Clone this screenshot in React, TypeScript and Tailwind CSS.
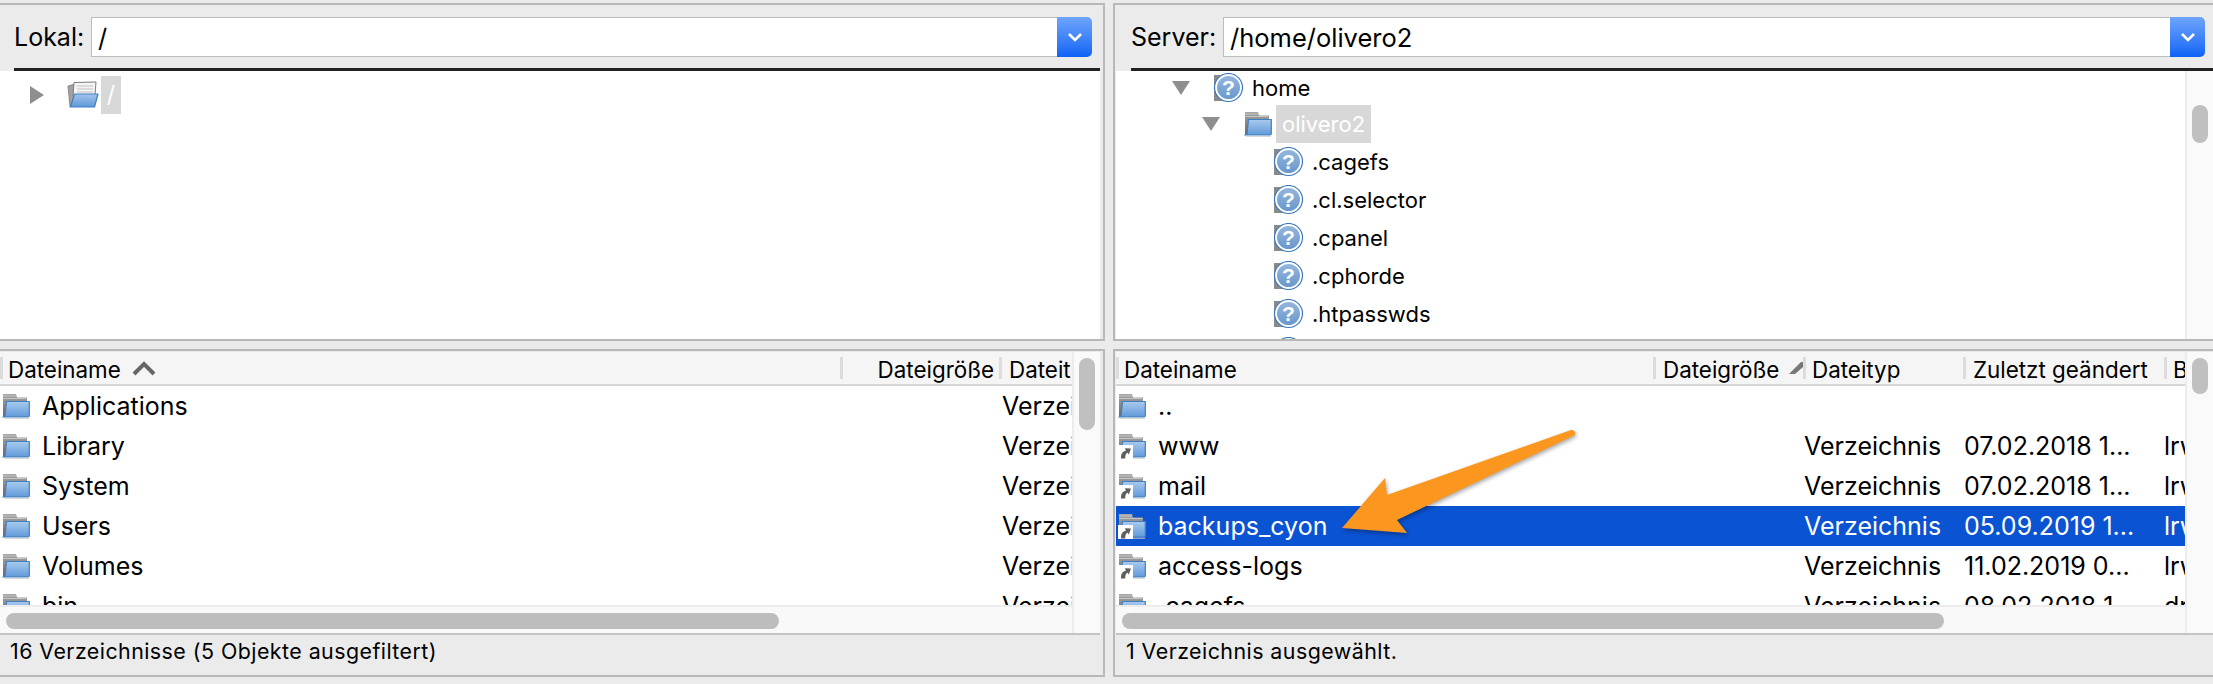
const fileColsLeft = ["Applications", "Library", "System", "Users", "Volumes", "bin"];

const serverRows = [
  { name: "..", link: false, type: "", date: "", attr: "" },
  { name: "www", link: true, type: "Verzeichnis", date: "07.02.2018 1...", attr: "lrwxrwxrwx" },
  { name: "mail", link: true, type: "Verzeichnis", date: "07.02.2018 1...", attr: "lrwxrwxrwx" },
  { name: "backups_cyon", link: true, type: "Verzeichnis", date: "05.09.2019 1...", attr: "lrwxrwxrwx", selected: true },
  { name: "access-logs", link: true, type: "Verzeichnis", date: "11.02.2019 0...", attr: "lrwxrwxrwx" },
  { name: ".cagefs", link: false, type: "Verzeichnis", date: "08.02.2018 1...", attr: "drwxr-xr-x" },
];

const treeChildren = [".cagefs", ".cl.selector", ".cpanel", ".cphorde", ".htpasswds", ".koality"];

function FolderIcon({ link = false }: { link?: boolean }) {
  return (
    <svg width="28" height="26" viewBox="0 0 28 26" className="shrink-0">
      <defs>
        <linearGradient id="folder-back" x1="0" y1="0" x2="0" y2="1">
          <stop offset="0" stopColor="#a6a6a6" />
          <stop offset="1" stopColor="#666666" />
        </linearGradient>
        <linearGradient id="folder-front" x1="0" y1="0" x2="0" y2="1">
          <stop offset="0" stopColor="#a9caee" />
          <stop offset="1" stopColor="#5f9ad9" />
        </linearGradient>
      </defs>
      <path d="M1 1 L1 24 L5 24 L5 8 L25 8 L25 4.5 L15 4.5 L14 1 Z" fill="url(#folder-back)" />
      <path d="M1 3 H14 M1 5.5 H24" stroke="#d0d0d0" strokeWidth="0.8" />
      <path d="M4.5 8.5 H27.3 V22.8 Q27.3 24 26 24 H1.5 L3 23 Z" fill="url(#folder-front)" stroke="#3f7fc6" strokeWidth="1.2" />
      <path d="M2 25.2 H27" stroke="#c8c8c8" strokeWidth="1" />
      {link && (
        <>
          <rect x="0" y="12" width="15" height="14" fill="#ffffff" />
          <path d="M3 25.5 C3 20.5 4.5 18.5 8 17.5 L6.8 15.2 L13 15.5 L10.8 21.5 L9.6 19.8 C7.8 20.5 7.2 22.5 7.2 25.5 Z" fill="#5f5f5f" />
        </>
      )}
    </svg>
  );
}

function OpenFolderIcon() {
  return (
    <svg width="32" height="28" viewBox="0 0 32 28" className="shrink-0">
      <defs>
        <linearGradient id="open-front" x1="0" y1="0" x2="0" y2="1">
          <stop offset="0" stopColor="#a3c5ec" />
          <stop offset="1" stopColor="#5d98d8" />
        </linearGradient>
      </defs>
      <path d="M1 5 L8 3 L8 24 L3 26 Z" fill="#a2a2a2" stroke="#777777" strokeWidth="0.8" />
      <path d="M7 1.5 L29 1 L28 14 L6 15 Z" fill="#f4f4f4" stroke="#7d7d7d" strokeWidth="1" />
      <path d="M10 5 H26 M10 8 H26 M10 11 H26" stroke="#c2c2c2" strokeWidth="1" />
      <path d="M7.5 13 L31 13 L27.5 26 L3.5 26 Z" fill="url(#open-front)" stroke="#3f7fc6" strokeWidth="1.2" strokeLinejoin="round" />
    </svg>
  );
}

function QuestionIcon() {
  return (
    <svg width="31" height="30" viewBox="0 0 31 30" className="shrink-0">
      <defs>
        <linearGradient id="question-fill" x1="0" y1="0" x2="0" y2="1">
          <stop offset="0" stopColor="#94b6dd" />
          <stop offset="1" stopColor="#6a97cc" />
        </linearGradient>
      </defs>
      <rect x="1" y="2" width="10" height="26" fill="#8a8a8a" />
      <circle cx="15.5" cy="14.5" r="14" fill="#ffffff" stroke="#3a78bd" strokeWidth="1.2" />
      <circle cx="15.5" cy="14.5" r="11.5" fill="url(#question-fill)" />
      <text x="15.5" y="22" textAnchor="middle" fontSize="21" fontWeight="700" fill="#ffffff" fontFamily="Liberation Sans, sans-serif">?</text>
    </svg>
  );
}

function Triangle({ open = false }: { open?: boolean }) {
  return (
    <svg width="18" height="18" viewBox="0 0 18 18" className="shrink-0">
      {open ? <path d="M0 2 H18 L9 16 Z" fill="#8e8e8e" /> : <path d="M2 0 L16 9 L2 18 Z" fill="#8e8e8e" />}
    </svg>
  );
}

function PathBar({ label, value, labelWidth }: { label: string; value: string; labelWidth: string }) {
  return (
    <div className="h-[66px] shrink-0 border-b-[3px] border-[#222222] flex items-center">
      <span className={`${labelWidth} shrink-0 pt-[2px] text-[25px] text-black`}>{label}</span>
      <div className="flex-1 h-[40px] bg-white border border-[#bcbcbc] border-r-0 flex items-center pl-[6px] pt-[3px] text-[25.5px] text-black">
        {value}
      </div>
      <div className="w-[35px] h-[40px] shrink-0 mr-[8px] rounded-r-[5px] bg-gradient-to-b from-[#6ea4fb] to-[#0a63f6] flex items-center justify-center">
        <svg width="16" height="10" viewBox="0 0 16 10">
          <path d="M2 2 L8 8 L14 2" fill="none" stroke="#ffffff" strokeWidth="2.6" />
        </svg>
      </div>
    </div>
  );
}

function VScroll({ thumb }: { thumb: string }) {
  return (
    <div className="w-[28px] shrink-0 bg-[#fafafa] border-l-2 border-[#ececec] pl-[5px] pt-[6px]">
      <div className={`w-[16px] ${thumb} rounded-full bg-[#c0c0c0]`} />
    </div>
  );
}

function HeadSep() {
  return <span className="w-[3px] h-[22px] shrink-0 bg-[#dcdcdc]" />;
}

function HScroll({ thumb, pad }: { thumb: string; pad: string }) {
  return (
    <div className="h-[28px] shrink-0 bg-[#ebebeb] flex">
      <div className={`flex-1 bg-[#f9f9f9] border-t-2 border-[#ececec] ${pad} pt-[6px]`}>
        <div className={`${thumb} h-[16px] rounded-full bg-[#bdbdbd]`} />
      </div>
    </div>
  );
}

export default function App() {
  return (
    <div className="relative w-[2213px] h-[684px] overflow-hidden bg-[#ebebeb] pt-[3px] font-['Inter',sans-serif] text-black">
      <div className="grid grid-cols-[1105px_1100px] gap-x-[8px] grid-rows-[338px_328px] gap-y-[8px]">
        {/* local tree */}
        <section className="border-t-2 border-r-2 border-b-2 border-[#b8b8b8] pr-[3px] flex flex-col overflow-hidden">
          <div className="pl-[14px] bg-[#ebebeb]">
            <PathBar label="Lokal:" value="/" labelWidth="w-[77px]" />
          </div>
          <div className="flex-1 bg-white flex items-start pl-[28px] pt-[5px] gap-[21px]">
            <div className="pt-[10px]">
              <Triangle />
            </div>
            <div className="flex items-center gap-[2px] h-[38px]">
              <OpenFolderIcon />
              <span className="w-[20px] h-[38px] bg-[#d8d8d8] flex items-center justify-center text-[23px] text-white">/</span>
            </div>
          </div>
        </section>

        {/* server tree */}
        <section className="border-t-2 border-l-2 border-b-2 border-[#b8b8b8] pl-[1px] flex flex-col overflow-hidden">
          <div className="pl-[15px] bg-[#ebebeb]">
            <PathBar label="Server:" value="/home/olivero2" labelWidth="w-[92px]" />
          </div>
          <div className="flex-1 flex min-h-0 bg-white">
            <div className="flex-1 overflow-hidden text-[22px] text-black">
              <div className="h-[34px] flex items-center pl-[56px]">
                <Triangle open />
                <span className="w-[23px]" />
                <QuestionIcon />
                <span className="ml-[8px]">home</span>
              </div>
              <div className="h-[38px] flex items-center pl-[86px]">
                <Triangle open />
                <span className="w-[24px]" />
                <FolderIcon />
                <span className="ml-[4px] h-[38px] px-[6px] bg-[#d8d8d8] text-white flex items-center">olivero2</span>
              </div>
              {treeChildren.map((name) => (
                <div key={name} className="h-[38px] flex items-center pl-[157px]">
                  <QuestionIcon />
                  <span className="ml-[8px]">{name}</span>
                </div>
              ))}
            </div>
            <div className="w-[28px] shrink-0 bg-[#fafafa] border-l-2 border-[#ececec] pl-[5px] pt-[34px]">
              <div className="w-[16px] h-[38px] rounded-full bg-[#c0c0c0]" />
            </div>
          </div>
        </section>

        {/* local files */}
        <section className="border-t-2 border-r-2 border-b-2 border-[#b8b8b8] pr-[3px] pt-[1px] flex flex-col overflow-hidden">
          <div className="flex flex-1 min-h-0">
            <div className="flex-1 flex flex-col min-w-0 overflow-hidden">
              <div className="h-[34px] shrink-0 bg-[#f5f5f5] border-b-2 border-[#d6d6d6] flex items-center text-[22.4px] whitespace-nowrap overflow-hidden">
                <HeadSep />
                <span className="w-[128px] pl-[5px] pt-[4px] shrink-0">Dateiname</span>
                <svg width="26" height="16" viewBox="0 0 26 16" className="shrink-0">
                  <path d="M3 14 L13 4 L23 14" fill="none" stroke="#666666" strokeWidth="4" />
                </svg>
                <span className="w-[683px] shrink-0" />
                <HeadSep />
                <span className="w-[156px] pr-[5px] pt-[4px] shrink-0 text-right">Dateigröße</span>
                <HeadSep />
                <span className="pl-[7px] pt-[4px]">Dateit</span>
              </div>
              <div className="flex-1 bg-white overflow-hidden">
                {fileColsLeft.map((name) => (
                  <div key={name} className="h-[40px] flex items-center text-[25px] whitespace-nowrap overflow-hidden pl-[2px]">
                    <FolderIcon />
                    <span className="ml-[12px] w-[960px] pt-[2px] shrink-0">{name}</span>
                    <span className="pt-[2px]">Verzeichnis</span>
                  </div>
                ))}
              </div>
              <HScroll thumb="w-[773px]" pad="pl-[6px]" />
            </div>
            <VScroll thumb="h-[72px]" />
          </div>
          <div className="h-[42px] shrink-0 border-t-2 border-[#c4c4c4] bg-[#ebebeb] flex items-start pl-[10px] text-[21.4px] tracking-[0.45px]">
            16 Verzeichnisse (5 Objekte ausgefiltert)
          </div>
        </section>

        {/* server files */}
        <section className="border-t-2 border-l-2 border-b-2 border-[#b8b8b8] pl-[1px] pt-[1px] flex flex-col overflow-hidden">
          <div className="flex flex-1 min-h-0">
            <div className="flex-1 flex flex-col min-w-0 overflow-hidden">
              <div className="h-[34px] shrink-0 bg-[#f5f5f5] border-b-2 border-[#d6d6d6] flex items-center text-[22.4px] whitespace-nowrap overflow-hidden">
                <HeadSep />
                <span className="w-[534px] pl-[5px] pt-[4px] shrink-0">Dateiname</span>
                <HeadSep />
                <span className="w-[133px] pl-[7px] pt-[4px] shrink-0">Dateigröße</span>
                <svg width="14" height="18" viewBox="0 0 14 18" className="shrink-0">
                  <path d="M0 15 L12 3 L14 3 L14 8 L6 15 Z" fill="#777777" />
                </svg>
                <HeadSep />
                <span className="w-[157px] pl-[6px] pt-[4px] shrink-0">Dateityp</span>
                <HeadSep />
                <span className="w-[198px] pl-[7px] pt-[4px] shrink-0">Zuletzt geändert</span>
                <HeadSep />
                <span className="pl-[6px] pt-[4px]">Besitzer</span>
              </div>
              <div className="flex-1 bg-white overflow-hidden">
                {serverRows.map((row) => (
                  <div
                    key={row.name}
                    className={`h-[40px] flex items-center text-[25px] whitespace-nowrap overflow-hidden pl-[2px] ${row.selected ? "bg-[#0a53d2] text-white" : ""}`}
                  >
                    <FolderIcon link={row.link} />
                    <span className="ml-[12px] w-[646px] pt-[2px] shrink-0">{row.name}</span>
                    <span className="w-[160px] pt-[2px] shrink-0">{row.type}</span>
                    <span className="w-[200px] pt-[2px] shrink-0">{row.date}</span>
                    <span className="pt-[2px]">{row.attr}</span>
                  </div>
                ))}
              </div>
              <HScroll thumb="w-[822px]" pad="pl-[6px]" />
            </div>
            <VScroll thumb="h-[36px]" />
          </div>
          <div className="h-[42px] shrink-0 border-t-2 border-[#c4c4c4] bg-[#ebebeb] flex items-start pl-[10px] text-[21.4px] tracking-[0.45px]">
            1 Verzeichnis ausgewählt.
          </div>
        </section>
      </div>

      {/* annotation arrow */}
      <svg width="260" height="120" viewBox="0 0 260 120" className="absolute left-[1330px] top-[420px] drop-shadow-[1px_2px_2px_rgba(0,0,0,0.35)]">
        <path
          d="M12 108 L55 58 L57 75 L241 10 Q246 10 245 15 L67 100 L77 113 Z"
          fill="#fb961f"
        />
      </svg>
    </div>
  );
}
